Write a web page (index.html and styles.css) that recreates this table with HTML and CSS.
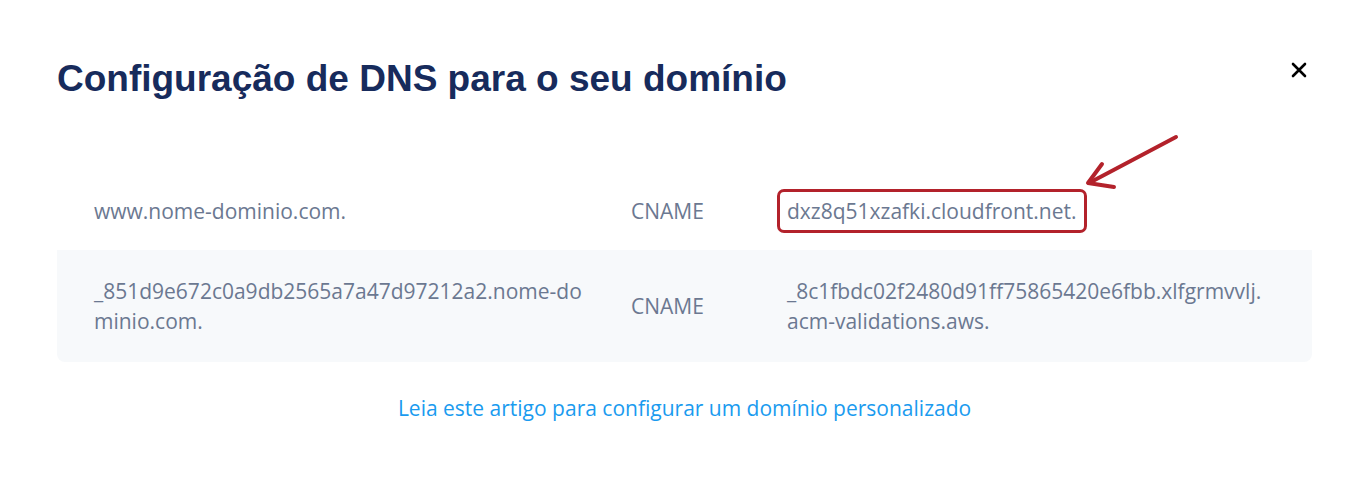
FILE: index.html
```html
<!DOCTYPE html>
<html lang="pt">
  <head>
    <meta charset="UTF-8" />
    <title>Configuração de DNS</title>
    <link rel="stylesheet" href="styles.css">
  </head>
  <body>
    <div class="modal">
      <div class="modal-header">
        <h2 class="modal-title">Configuração de DNS para o seu domínio</h2>
        <button class="close-btn" aria-label="Fechar">
          <svg width="16" height="16" viewBox="0 0 16 16">
            <path d="M2 2 L14 14 M14 2 L2 14" stroke="#000" stroke-width="2.6" stroke-linecap="round" />
          </svg>
        </button>
      </div>

      <div class="dns-table">
        <div class="dns-row">
          <div class="cell name"><span>www.nome-dominio.com.</span></div>
          <div class="cell type"><span>CNAME</span></div>
          <div class="cell value">
            <span><span class="highlight">dxz8q51xzafki.cloudfront.net.</span></span>
            <svg class="arrow" width="110" height="70" viewBox="0 0 110 70">
              <path d="M96 10 L9 56" stroke="#b3222b" stroke-width="4" stroke-linecap="round" fill="none" />
              <path d="M22 37 L8 56 L34 60" stroke="#b3222b" stroke-width="4" stroke-linecap="round" stroke-linejoin="round" fill="none" />
            </svg>
          </div>
        </div>
        <div class="dns-row alt">
          <div class="cell name"><span>_851d9e672c0a9db2565a7a47d97212a2.nome-dominio.com.</span></div>
          <div class="cell type"><span>CNAME</span></div>
          <div class="cell value"><span>_8c1fbdc02f2480d91ff75865420e6fbb.xlfgrmvvlj.acm-validations.aws.</span></div>
        </div>
      </div>

      <p class="help">
        <a href="#">Leia este artigo para configurar um domínio personalizado</a>
      </p>
    </div>
  </body>
</html>
```

FILE: styles.css
```css
body {
  margin: 0;
  background: #fff;
  font-family: "Open Sans", sans-serif;
}
.modal {
  padding: 52px 57px 40px 57px;
}
.modal-header {
  display: flex;
  justify-content: space-between;
  align-items: flex-start;
}
.modal-title {
  margin: 6px 0 0 0;
  font-family: "Liberation Sans", Arial, sans-serif;
  font-weight: bold;
  font-size: 37px;
  color: #172b5c;
}
.close-btn {
  background: none;
  border: 0;
  padding: 0;
  margin: 10px 5px 0 0;
  cursor: pointer;
}
.dns-table {
  margin-top: 72px;
}
.dns-row {
  display: grid;
  grid-template-columns: 537px 156px 1fr;
  font-size: 21px;
  line-height: 30px;
  color: #6b7891;
}
.dns-row.alt {
  background: #f7f9fb;
  border-radius: 0 0 8px 8px;
}
.cell {
  padding: 24px 0 24px 37px;
  word-break: break-all;
  display: flex;
  align-items: center;
}
.alt .cell {
  padding-top: 26px;
  padding-bottom: 26px;
}
.cell.value {
  padding-right: 40px;
  position: relative;
}
.highlight {
  border: 3px solid #b3222b;
  border-radius: 7px;
  padding: 5px 7px;
  margin-left: -10px;
}
.arrow {
  position: absolute;
  left: 330px;
  top: -45px;
}
.help {
  text-align: center;
  margin: 32px 0 0 0;
  font-size: 21px;
}
.help a {
  color: #1a9bef;
  text-decoration: none;
}
```
